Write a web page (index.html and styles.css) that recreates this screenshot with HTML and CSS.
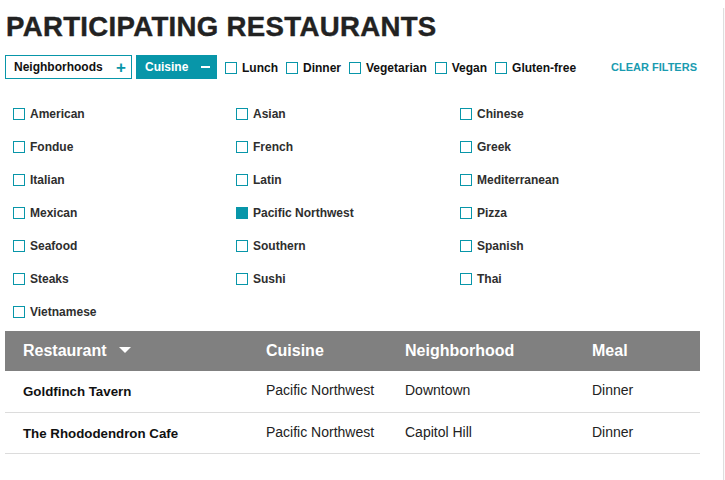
FILE: index.html
```html
<!DOCTYPE html>
<html>
<head>
<meta charset="utf-8">
<link rel="stylesheet" href="styles.css">
</head>
<body>
<div class="page">
  <main class="main">
    <h1 class="title">PARTICIPATING RESTAURANTS</h1>
    <div class="filters">
      <button class="btn btn-outline"><span>Neighborhoods</span><span class="sign">+</span></button>
      <button class="btn btn-filled"><span>Cuisine</span><span class="sign minus"></span></button>
      <label class="check"><span class="box"></span>Lunch</label>
      <label class="check"><span class="box"></span>Dinner</label>
      <label class="check"><span class="box"></span>Vegetarian</label>
      <label class="check"><span class="box"></span>Vegan</label>
      <label class="check"><span class="box"></span>Gluten-free</label>
      <a class="clear">CLEAR FILTERS</a>
    </div>
    <div class="cuisines">
      <label class="cuisine"><span class="box"></span>American</label>
      <label class="cuisine"><span class="box"></span>Asian</label>
      <label class="cuisine"><span class="box"></span>Chinese</label>
      <label class="cuisine"><span class="box"></span>Fondue</label>
      <label class="cuisine"><span class="box"></span>French</label>
      <label class="cuisine"><span class="box"></span>Greek</label>
      <label class="cuisine"><span class="box"></span>Italian</label>
      <label class="cuisine"><span class="box"></span>Latin</label>
      <label class="cuisine"><span class="box"></span>Mediterranean</label>
      <label class="cuisine"><span class="box"></span>Mexican</label>
      <label class="cuisine"><span class="box checked"></span>Pacific Northwest</label>
      <label class="cuisine"><span class="box"></span>Pizza</label>
      <label class="cuisine"><span class="box"></span>Seafood</label>
      <label class="cuisine"><span class="box"></span>Southern</label>
      <label class="cuisine"><span class="box"></span>Spanish</label>
      <label class="cuisine"><span class="box"></span>Steaks</label>
      <label class="cuisine"><span class="box"></span>Sushi</label>
      <label class="cuisine"><span class="box"></span>Thai</label>
      <label class="cuisine"><span class="box"></span>Vietnamese</label>
    </div>
    <table class="table">
      <thead>
        <tr>
          <th class="c1">Restaurant <span class="caret"></span></th>
          <th class="c2">Cuisine</th>
          <th class="c3">Neighborhood</th>
          <th class="c4">Meal</th>
        </tr>
      </thead>
      <tbody>
        <tr>
          <td class="name">Goldfinch Tavern</td>
          <td>Pacific Northwest</td>
          <td>Downtown</td>
          <td>Dinner</td>
        </tr>
        <tr>
          <td class="name">The Rhododendron Cafe</td>
          <td>Pacific Northwest</td>
          <td>Capitol Hill</td>
          <td>Dinner</td>
        </tr>
      </tbody>
    </table>
  </main>
  <div class="scrollbar"></div>
</div>
</body>
</html>
```
FILE: styles.css
```css
* { box-sizing: border-box; }
html, body { margin: 0; padding: 0; background: #fff; }
body { font-family: "Liberation Sans", Arial, sans-serif; color: #222; }
.page { display: flex; width: 725px; min-height: 480px; }
.main { width: 723px; padding: 0 0 0 5px; }
.scrollbar { width: 2px; margin-top: 8px; border-left: 1px solid #dedede; background: #fafafa; }

.title {
  margin: 11px 0 0 1px;
  font-size: 27.6px;
  line-height: 32px;
  font-weight: 900;
  color: #222;
  letter-spacing: 0.32px;
  -webkit-text-stroke: 0.4px #222;
}

.filters {
  display: flex;
  align-items: center;
  width: 692px;
  margin-top: 12px;
  height: 24px;
}
.btn {
  display: flex;
  align-items: center;
  justify-content: space-between;
  height: 24px;
  border: 1px solid #0896a9;
  font-family: "Liberation Sans", Arial, sans-serif;
  font-weight: bold;
  font-size: 12px;
  padding: 0 5px 0 8px;
  margin: 0;
}
.btn-outline { width: 127px; background: #fff; color: #111; }
.btn-filled { width: 81px; margin-left: 4px; background: #0896a9; color: #fff; padding-right: 5px; }
.sign { color: #0896a9; font-size: 17px; line-height: 1; }
.minus { width: 9px; height: 2px; background: #fff; margin-right: 1px; }

.check {
  display: flex;
  align-items: center;
  font-size: 12px;
  font-weight: bold;
  color: #111;
  margin-left: 8px;
  padding-top: 1px;
}
.box {
  width: 12px;
  height: 12px;
  border: 1px solid #0896a9;
  margin-right: 5px;
  flex: none;
  background: #fff;
}
.box.checked { background: #0896a9; }
.clear {
  margin-left: auto;
  color: #1a9bb0;
  font-size: 11px;
  font-weight: bold;
}

.cuisines {
  display: grid;
  grid-template-columns: 223px 224px 223px;
  grid-auto-rows: 33px;
  margin: 18px 0 0 8px;
}
.cuisine {
  display: flex;
  align-items: center;
  font-size: 12px;
  font-weight: bold;
  color: #2e2e2e;
}

.table {
  width: 695px;
  margin-top: 3px;
  border-collapse: collapse;
  table-layout: fixed;
}
.table th {
  background: #808080;
  color: #fff;
  font-size: 16px;
  font-weight: bold;
  text-align: left;
  height: 40px;
  padding: 0 0 0 18px;
}
.c1 { width: 243px; }
.c2 { width: 139px; }
.c3 { width: 187px; }
.c4 { width: 126px; }
.caret {
  display: inline-block;
  width: 0; height: 0;
  border-left: 6px solid transparent;
  border-right: 6px solid transparent;
  border-top: 6px solid #fff;
  margin-left: 8px;
  vertical-align: 3px;
}
.table td {
  font-size: 14px;
  color: #222;
  vertical-align: top;
  padding: 11px 0 12px 18px;
  line-height: 16px;
  height: 41px;
  border-bottom: 1px solid #dcdcdc;
}
.table td.name {
  font-weight: bold;
  font-size: 13.3px;
  padding-top: 13px;
  padding-bottom: 10px;
  color: #111;
}
```
